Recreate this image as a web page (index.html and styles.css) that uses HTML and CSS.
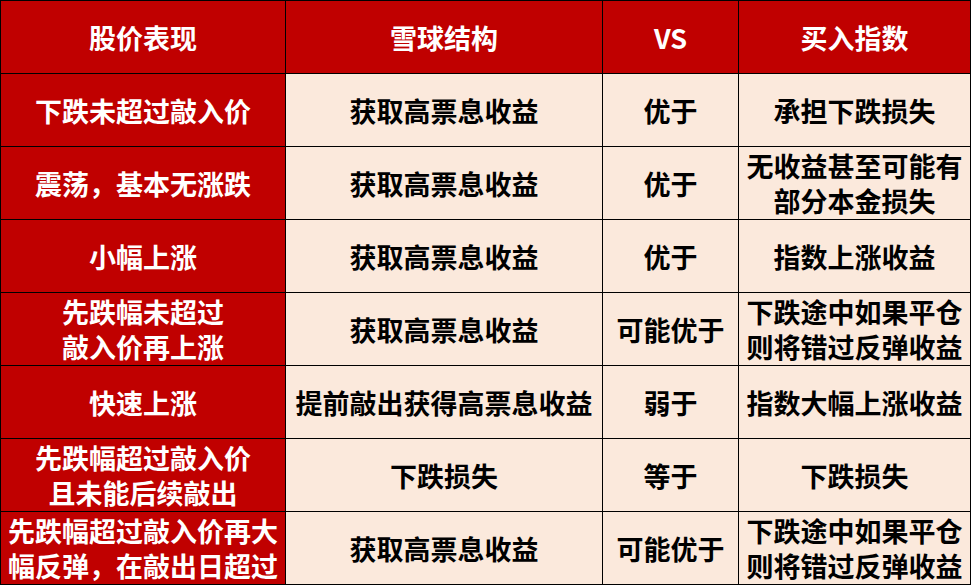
FILE: index.html
```html
<!DOCTYPE html>
<html lang="zh-CN">
<head>
<meta charset="utf-8">
<title>雪球结构 vs 买入指数</title>
<link rel="stylesheet" href="styles.css">
</head>
<body>
<div class="grid">
  <div class="cell head">股价表现</div>
  <div class="cell head">雪球结构</div>
  <div class="cell head">VS</div>
  <div class="cell head">买入指数</div>

  <div class="cell side">下跌未超过敲入价</div>
  <div class="cell body">获取高票息收益</div>
  <div class="cell body">优于</div>
  <div class="cell body">承担下跌损失</div>

  <div class="cell side">震荡，基本无涨跌</div>
  <div class="cell body">获取高票息收益</div>
  <div class="cell body">优于</div>
  <div class="cell body">无收益甚至可能有<br>部分本金损失</div>

  <div class="cell side">小幅上涨</div>
  <div class="cell body">获取高票息收益</div>
  <div class="cell body">优于</div>
  <div class="cell body">指数上涨收益</div>

  <div class="cell side">先跌幅未超过<br>敲入价再上涨</div>
  <div class="cell body">获取高票息收益</div>
  <div class="cell body">可能优于</div>
  <div class="cell body">下跌途中如果平仓<br>则将错过反弹收益</div>

  <div class="cell side">快速上涨</div>
  <div class="cell body">提前敲出获得高票息收益</div>
  <div class="cell body">弱于</div>
  <div class="cell body">指数大幅上涨收益</div>

  <div class="cell side">先跌幅超过敲入价<br>且未能后续敲出</div>
  <div class="cell body">下跌损失</div>
  <div class="cell body">等于</div>
  <div class="cell body">下跌损失</div>

  <div class="cell side">先跌幅超过敲入价再大<br>幅反弹，在敲出日超过</div>
  <div class="cell body">获取高票息收益</div>
  <div class="cell body">可能优于</div>
  <div class="cell body">下跌途中如果平仓<br>则将错过反弹收益</div>
</div>
</body>
</html>
```
FILE: styles.css
```css
html, body {
  margin: 0;
  padding: 0;
  background: #ffffff;
}
body {
  font-family: "Noto Sans CJK SC", "Noto Sans", sans-serif;
}
.grid {
  display: grid;
  grid-template-columns: 284px 316px 135px 231px;
  grid-auto-rows: 72px;
  gap: 1px;
  padding: 1px;
  background: #000;
  width: 969px;
}
.cell {
  display: flex;
  align-items: center;
  justify-content: center;
  text-align: center;
  font-size: 27px;
  font-weight: 700;
  line-height: 35px;
  overflow: hidden;
  white-space: nowrap;
}
.head, .side {
  background: #c00000;
  color: #ffffff;
}
.body {
  background: #fbe9dc;
  color: #000000;
}
```
